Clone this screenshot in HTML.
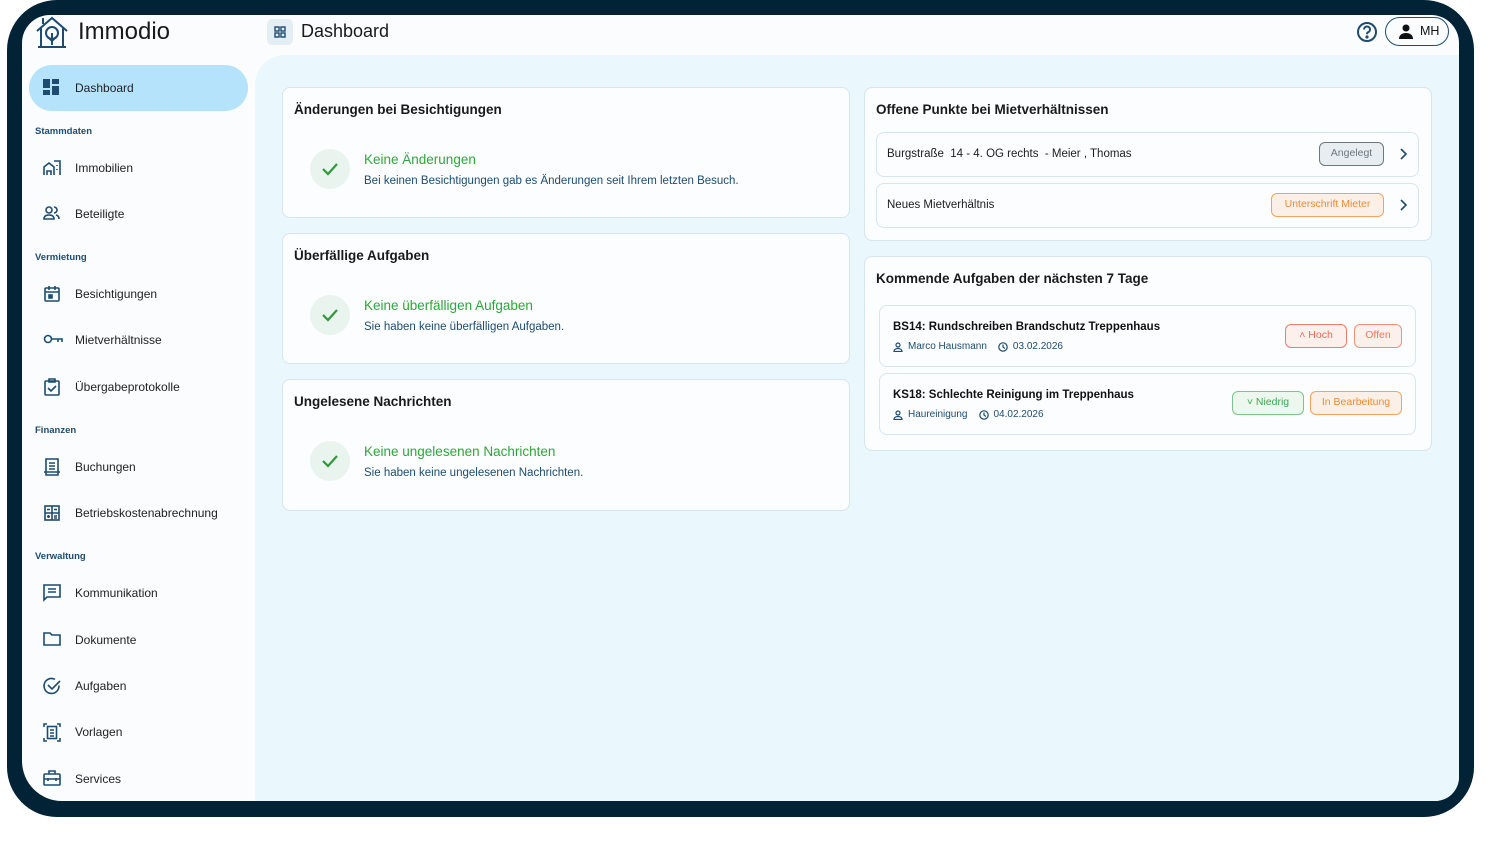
<!DOCTYPE html>
<html><head><meta charset="utf-8"><style>
*{box-sizing:border-box;margin:0;padding:0}
body{width:1494px;height:846px;background:#fff;font-family:"Liberation Sans",Arial,sans-serif;position:relative;overflow:hidden;color:#1d1d1d}
.frame{position:absolute;left:7px;top:0;width:1467px;height:817px;background:#022235;border-radius:50px}
.screen{position:absolute;left:22px;top:15px;width:1437px;height:786px;background:#fafcfe;border-radius:28px 28px 24px 40px;overflow:hidden}
.main{position:absolute;left:233px;top:40px;width:1204px;height:746px;background:#eaf7fd;border-top-left-radius:30px}
.abs{position:absolute}
.nav{position:absolute;left:0;width:233px;height:20px;font-size:12px;color:#222}
.nav svg{position:absolute;left:21px;top:0}
.nav span{position:absolute;left:53px;top:2px}
.sec{position:absolute;left:13px;font-size:9.5px;font-weight:bold;color:#1d4c70}
.card{position:absolute;background:#fbfdff;border:1.5px solid #d6e5ef;border-radius:8px}
.ct{position:absolute;left:11px;font-size:13.5px;font-weight:bold;color:#1a1a1a}
.ok{position:absolute;left:27px;width:40px;height:40px;border-radius:50%;background:#e9f4ee}
.okt{position:absolute;left:81px;font-size:13.5px;color:#2fa63b}
.oks{position:absolute;left:81px;font-size:11.5px;color:#1d4c70}
.row{position:absolute;background:#fbfdff;border:1.5px solid #d6e5ef;border-radius:8px}
.badge{position:absolute;height:24px;border-radius:6px;font-size:10.5px;text-align:center;line-height:21px;border:1.5px solid}
.chev{position:absolute;left:522px;top:15px}
.meta{position:absolute;left:13px;top:35px;font-size:10px;color:#1d4c70;display:flex;align-items:center}
.meta svg{margin-right:5px}
</style></head><body>
<div class="frame"></div>
<div class="screen">
  <svg class="abs" style="left:12px;top:0" width="36" height="34" viewBox="0 0 36 34" fill="none" stroke="#1d4c70" stroke-width="2"><path d="M3 16 L18 3 L33 16"/><path d="M7 13 V32 H29 V13"/><path d="M9 3 V9"/><circle cx="18" cy="18" r="6"/><path d="M18 18 V30 M14 22 L18 26 L22 22"/><path d="M4 32 H32"/></svg>
  <div class="abs" style="left:56px;top:3px;font-size:24px;color:#1a1a1a">Immodio</div>
  <div class="abs" style="left:245px;top:4px;width:26px;height:26px;background:#e4eef5;border-radius:5px"></div>
  <svg class="abs" style="left:252px;top:11px" width="12" height="12" viewBox="0 0 12 12" fill="none" stroke="#1d4c70" stroke-width="1.4"><rect x="1" y="1" width="4" height="4"/><rect x="7" y="1" width="4" height="4"/><rect x="1" y="7" width="4" height="4"/><rect x="7" y="7" width="4" height="4"/></svg>
  <div class="abs" style="left:279px;top:6px;font-size:18px;color:#1a1a1a">Dashboard</div>
  <svg class="abs" style="left:1334px;top:6px" width="22" height="22" viewBox="0 0 22 22" fill="none" stroke="#1d4c70" stroke-width="2"><circle cx="11" cy="11" r="9"/><path d="M8 8.5a3 3 0 1 1 4 2.8c-.8.4-1 1-1 2"/><circle cx="11" cy="16" r=".6" fill="#1d4c70"/></svg>
  <div class="abs" style="left:1363px;top:2px;width:64px;height:29px;border:1.5px solid #1d4c70;border-radius:15px"></div>
  <svg class="abs" style="left:1376px;top:9px" width="16" height="15" viewBox="0 0 16 15" fill="#111"><circle cx="8" cy="4" r="3.5"/><path d="M1 15c0-4 3-6 7-6s7 2 7 6z"/></svg>
  <div class="abs" style="left:1398px;top:9px;font-size:12.5px;color:#111">MH</div>

  <div class="abs" style="left:7px;top:50px;width:219px;height:46px;background:#b4e3fb;border-radius:23px"></div>
  <div class="nav" style="top:64px"><svg width="18" height="16" viewBox="0 0 18 16" fill="#1d4c70"><rect x="0" y="0" width="7" height="9"/><rect x="9" y="0" width="7" height="5"/><rect x="0" y="11" width="7" height="5"/><rect x="9" y="7" width="7" height="9"/></svg><span>Dashboard</span></div>
  <div class="sec" style="top:111px">Stammdaten</div>
  <div class="nav" style="top:144px"><svg width="18" height="17" viewBox="0 0 18 17" fill="none" stroke="#1d4c70" stroke-width="1.6"><path d="M1 16V8l5-4 5 4v8M4 16v-4h4v4M11 2h6v14M14 6v1M14 10v1"/></svg><span>Immobilien</span></div>
  <div class="nav" style="top:190px"><svg width="18" height="16" viewBox="0 0 18 16" fill="none" stroke="#1d4c70" stroke-width="1.6"><circle cx="6" cy="5" r="3"/><path d="M1 14c0-3 2-4 5-4s5 1 5 4zM11 2a3 3 0 0 1 0 6M13 10c2 .5 3 2 3 4"/></svg><span>Beteiligte</span></div>
  <div class="sec" style="top:237px">Vermietung</div>
  <div class="nav" style="top:270px"><svg width="18" height="18" viewBox="0 0 18 18" fill="none" stroke="#1d4c70" stroke-width="1.6"><rect x="2" y="3" width="14" height="13" rx="1"/><path d="M2 7h14M6 1v4M12 1v4"/><rect x="6" y="10" width="3" height="3" fill="#1d4c70"/></svg><span>Besichtigungen</span></div>
  <div class="nav" style="top:316px"><svg width="20" height="16" viewBox="0 0 20 16" fill="none" stroke="#1d4c70" stroke-width="1.6"><circle cx="5" cy="8" r="3.5"/><path d="M8.5 8H19v3M15 8v3"/></svg><span>Mietverhältnisse</span></div>
  <div class="nav" style="top:363px"><svg width="18" height="18" viewBox="0 0 18 18" fill="none" stroke="#1d4c70" stroke-width="1.6"><rect x="2" y="3" width="14" height="14" rx="1"/><path d="M6 1h6v3H6zM5 10l3 3 5-5"/></svg><span>Übergabeprotokolle</span></div>
  <div class="sec" style="top:410px">Finanzen</div>
  <div class="nav" style="top:443px"><svg width="18" height="18" viewBox="0 0 18 18" fill="none" stroke="#1d4c70" stroke-width="1.6"><path d="M3 1h12v16H3zM6 5h6M6 8h6M6 11h6M1 14h16"/></svg><span>Buchungen</span></div>
  <div class="nav" style="top:489px"><svg width="18" height="18" viewBox="0 0 18 18" fill="none" stroke="#1d4c70" stroke-width="1.6"><rect x="2" y="2" width="14" height="14"/><path d="M9 2v14M2 9h14M4 5.5h3M11 5.5h3M5.5 11v3M4 12.5h3M11 12h3M11 14h3"/></svg><span>Betriebskostenabrechnung</span></div>
  <div class="sec" style="top:536px">Verwaltung</div>
  <div class="nav" style="top:569px"><svg width="18" height="18" viewBox="0 0 18 18" fill="none" stroke="#1d4c70" stroke-width="1.6"><path d="M1 1h16v12H4l-3 3zM5 5h8M5 8h8"/></svg><span>Kommunikation</span></div>
  <div class="nav" style="top:616px"><svg width="18" height="16" viewBox="0 0 18 16" fill="none" stroke="#1d4c70" stroke-width="1.6"><path d="M1 2h6l2 2h8v10H1z"/></svg><span>Dokumente</span></div>
  <div class="nav" style="top:662px"><svg width="18" height="18" viewBox="0 0 18 18" fill="none" stroke="#1d4c70" stroke-width="1.6"><path d="M16 8.5A7.5 7.5 0 1 1 12 2.3"/><path d="M5 8l4 4 8-8"/></svg><span>Aufgaben</span></div>
  <div class="nav" style="top:708px"><svg width="18" height="19" viewBox="0 0 18 19" fill="none" stroke="#1d4c70" stroke-width="1.6"><path d="M1 4V1h3M14 1h3v3M1 15v3h3M14 18h3v-3"/><rect x="4.5" y="3.5" width="9" height="12"/><path d="M7 7h4M7 10h4M7 13h4"/></svg><span>Vorlagen</span></div>
  <div class="nav" style="top:755px"><svg width="18" height="16" viewBox="0 0 18 16" fill="none" stroke="#1d4c70" stroke-width="1.6"><rect x="1" y="4" width="16" height="11" rx="1"/><path d="M6 4V1h6v3M1 9h16M5 8v3M13 8v3"/></svg><span>Services</span></div>

  <div class="main"></div>

  <div class="card" style="left:260px;top:72px;width:568px;height:131px">
    <div class="ct" style="top:14px">Änderungen bei Besichtigungen</div>
    <div class="ok" style="top:61px"><svg style="margin:12px 0 0 11px" width="18" height="16" viewBox="0 0 18 16" fill="none" stroke="#2e9a3a" stroke-width="2.2"><path d="M2 8l5 5 9-10"/></svg></div>
    <div class="okt" style="top:64px">Keine Änderungen</div>
    <div class="oks" style="top:87px">Bei keinen Besichtigungen gab es Änderungen seit Ihrem letzten Besuch.</div>
  </div>
  <div class="card" style="left:260px;top:218px;width:568px;height:131px">
    <div class="ct" style="top:14px">Überfällige Aufgaben</div>
    <div class="ok" style="top:61px"><svg style="margin:12px 0 0 11px" width="18" height="16" viewBox="0 0 18 16" fill="none" stroke="#2e9a3a" stroke-width="2.2"><path d="M2 8l5 5 9-10"/></svg></div>
    <div class="okt" style="top:64px">Keine überfälligen Aufgaben</div>
    <div class="oks" style="top:87px">Sie haben keine überfälligen Aufgaben.</div>
  </div>
  <div class="card" style="left:260px;top:364px;width:568px;height:132px">
    <div class="ct" style="top:14px">Ungelesene Nachrichten</div>
    <div class="ok" style="top:61px"><svg style="margin:12px 0 0 11px" width="18" height="16" viewBox="0 0 18 16" fill="none" stroke="#2e9a3a" stroke-width="2.2"><path d="M2 8l5 5 9-10"/></svg></div>
    <div class="okt" style="top:64px">Keine ungelesenen Nachrichten</div>
    <div class="oks" style="top:87px">Sie haben keine ungelesenen Nachrichten.</div>
  </div>

  <div class="card" style="left:842px;top:72px;width:568px;height:154px">
    <div class="ct" style="top:14px">Offene Punkte bei Mietverhältnissen</div>
    <div class="row" style="left:11px;top:44px;width:543px;height:45px">
      <div class="abs" style="left:10px;top:15px;font-size:11.5px">Burgstraße&nbsp; 14 - 4. OG rechts&nbsp; - Meier , Thomas</div>
      <div class="badge" style="left:442px;top:9px;width:65px;background:#e7edf0;border-color:#6d7780;color:#6d7780">Angelegt</div>
      <svg class="chev" width="8" height="12" viewBox="0 0 8 12" fill="none" stroke="#1d4c70" stroke-width="1.6"><path d="M2 1l5 5-5 5"/></svg>
    </div>
    <div class="row" style="left:11px;top:95px;width:543px;height:45px">
      <div class="abs" style="left:10px;top:15px;font-size:11.5px">Neues Mietverhältnis</div>
      <div class="badge" style="left:394px;top:9px;width:113px;background:#fbf0e8;border-color:#f5a25c;color:#f08a30">Unterschrift Mieter</div>
      <svg class="chev" width="8" height="12" viewBox="0 0 8 12" fill="none" stroke="#1d4c70" stroke-width="1.6"><path d="M2 1l5 5-5 5"/></svg>
    </div>
  </div>
  <div class="card" style="left:842px;top:241px;width:568px;height:195px">
    <div class="ct" style="top:14px">Kommende Aufgaben der nächsten 7 Tage</div>
    <div class="row" style="left:14px;top:48px;width:537px;height:62px">
      <div class="abs" style="left:13px;top:15px;font-size:11.5px;font-weight:bold;color:#111">BS14: Rundschreiben Brandschutz Treppenhaus</div>
      <div class="meta"><svg width="10" height="10" viewBox="0 0 10 10" fill="none" stroke="#1d4c70" stroke-width="1.2"><circle cx="5" cy="3" r="2"/><path d="M1 9.5c0-2 2-3 4-3s4 1 4 3z"/></svg>Marco Hausmann<svg style="margin-left:11px" width="10" height="10" viewBox="0 0 10 10" fill="none" stroke="#1d4c70" stroke-width="1.2"><circle cx="5" cy="5" r="4.2"/><path d="M5 2.5V5l1.8 1.5"/></svg>03.02.2026</div>
      <div class="badge" style="left:405px;top:18px;width:62px;background:#fbf0ec;border-color:#f07c6c;color:#ee6a55">˄ Hoch</div>
      <div class="badge" style="left:474px;top:18px;width:48px;background:#fbf0ec;border-color:#f0907a;color:#f07a5a">Offen</div>
    </div>
    <div class="row" style="left:14px;top:116px;width:537px;height:62px">
      <div class="abs" style="left:13px;top:15px;font-size:11.5px;font-weight:bold;color:#111">KS18: Schlechte Reinigung im Treppenhaus</div>
      <div class="meta"><svg width="10" height="10" viewBox="0 0 10 10" fill="none" stroke="#1d4c70" stroke-width="1.2"><circle cx="5" cy="3" r="2"/><path d="M1 9.5c0-2 2-3 4-3s4 1 4 3z"/></svg>Haureinigung<svg style="margin-left:11px" width="10" height="10" viewBox="0 0 10 10" fill="none" stroke="#1d4c70" stroke-width="1.2"><circle cx="5" cy="5" r="4.2"/><path d="M5 2.5V5l1.8 1.5"/></svg>04.02.2026</div>
      <div class="badge" style="left:352px;top:17px;width:72px;background:#ecf7ee;border-color:#7cc48a;color:#3ea650">˅ Niedrig</div>
      <div class="badge" style="left:430px;top:17px;width:92px;background:#fbf0e8;border-color:#f5a25c;color:#f08a30">In Bearbeitung</div>
    </div>
  </div>
</div>
</body></html>
